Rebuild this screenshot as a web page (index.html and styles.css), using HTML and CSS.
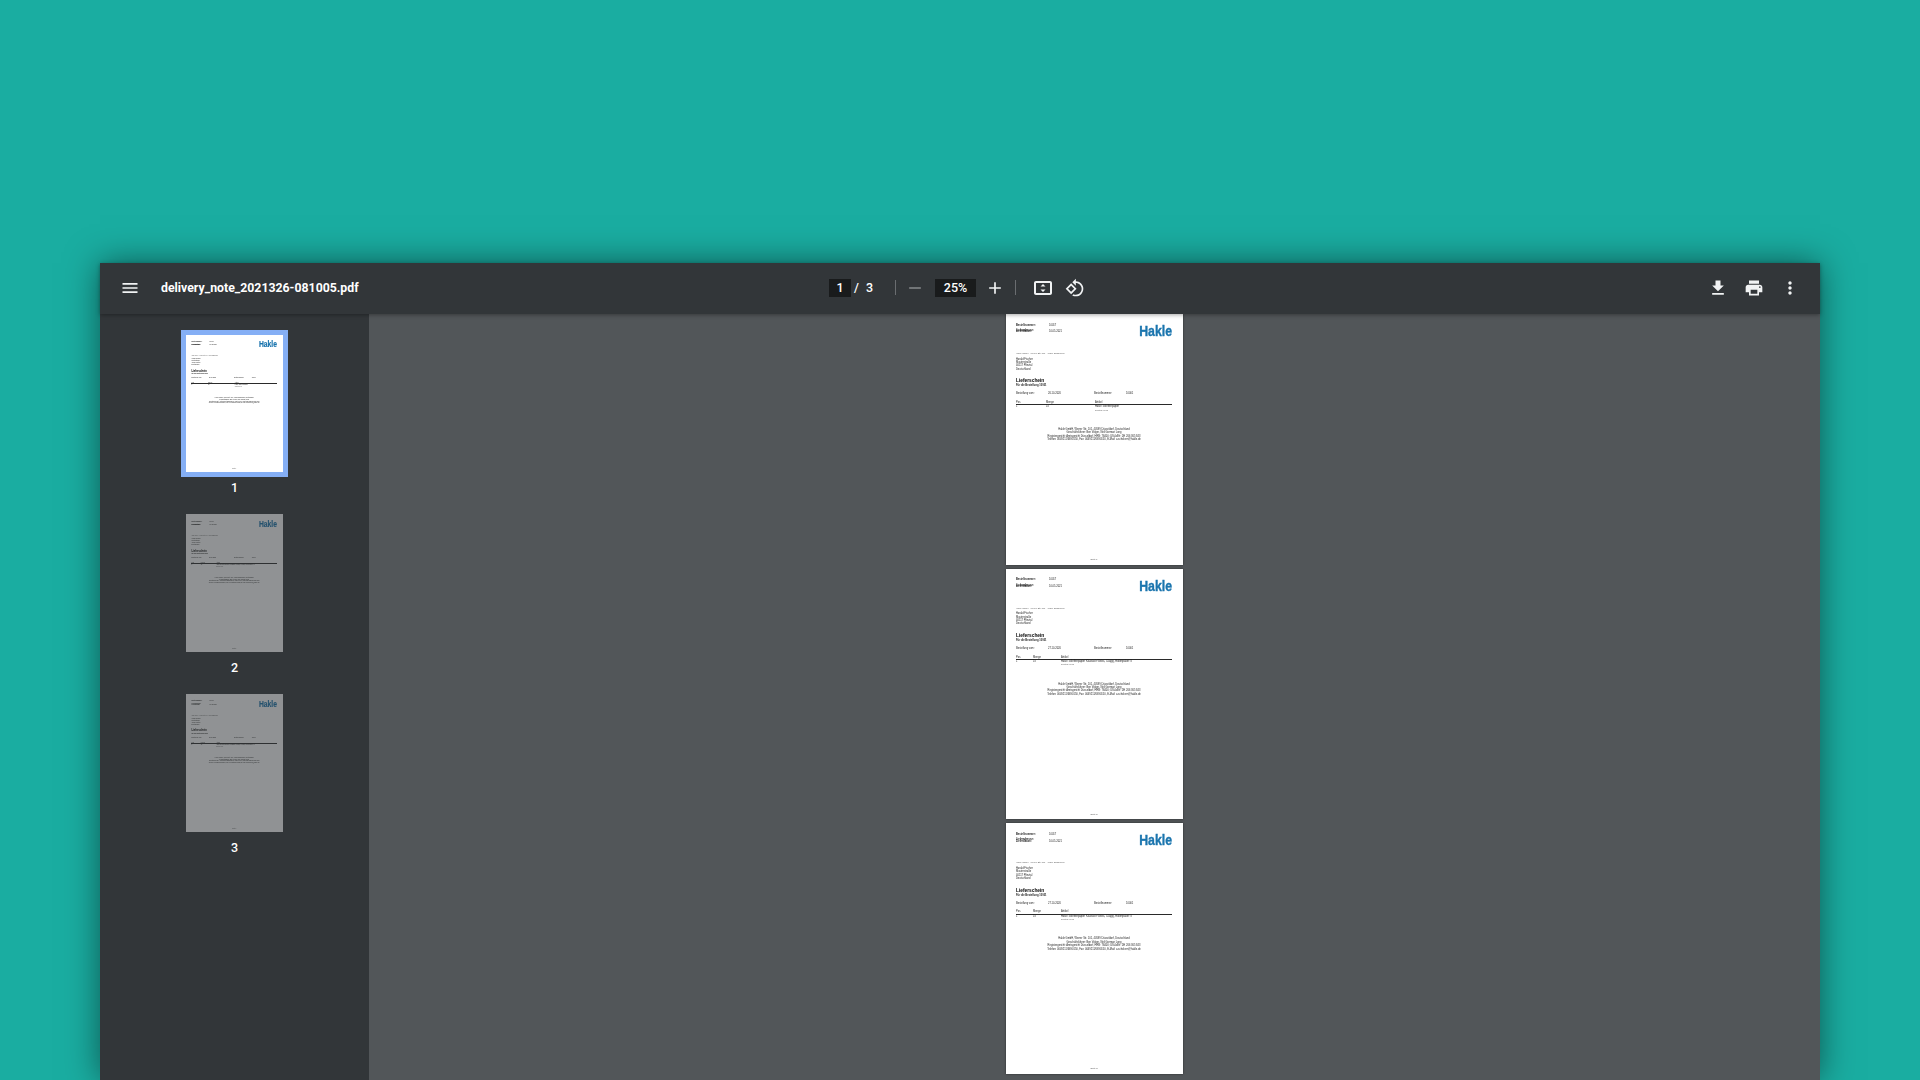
FILE: index.html
```html
<!DOCTYPE html>
<html lang="de">
<head>
<meta charset="utf-8">
<title>delivery_note_2021326-081005.pdf</title>
<link rel="stylesheet" href="styles.css">
</head>
<body>
<div class="viewer">
  <header class="toolbar">
    <div class="tb-left">
      <svg class="icon menu" viewBox="0 0 24 24"><path d="M3 18h18v-2H3v2zm0-5h18v-2H3v2zm0-7v2h18V6H3z"/></svg>
      <span class="title">delivery_note_2021326-081005.pdf</span>
    </div>
    <div class="tb-center">
      <span class="page-input">1</span>
      <span class="page-sep">/</span>
      <span class="page-total">3</span>
      <span class="divider first"></span>
      <svg class="icon dim" viewBox="0 0 24 24"><path d="M19 13H5v-2h14v2z"/></svg>
      <span class="zoom-input">25%</span>
      <svg class="icon" viewBox="0 0 24 24"><path d="M19 13h-6v6h-2v-6H5v-2h6V5h2v6h6v2z"/></svg>
      <span class="divider"></span>
      <svg class="icon large fit" viewBox="0 0 24 24"><path d="M19 5H5c-1.1 0-2 .9-2 2v10c0 1.1.9 2 2 2h14c1.1 0 2-.9 2-2V7c0-1.1-.9-2-2-2zm0 12H5V7h14v10z"/><path d="M12 8l-2.5 2.5h5zM12 16l2.5-2.5h-5z"/></svg>
      <svg class="icon rotate" viewBox="0 0 24 24"><path d="M7.34 6.41L.86 12.9l6.49 6.48 6.49-6.48-6.5-6.49zM3.69 12.9l3.66-3.66L11 12.9l-3.66 3.66-3.65-3.66zm15.67-6.26C17.61 4.88 15.3 4 13 4V.76L8.76 5 13 9.24V6c1.79 0 3.58.68 4.95 2.05 2.73 2.73 2.73 7.17 0 9.9C16.58 19.32 14.79 20 13 20c-.97 0-1.94-.21-2.84-.61l-1.49 1.49C10.02 21.62 11.51 22 13 22c2.3 0 4.61-.88 6.36-2.64 3.52-3.51 3.52-9.21 0-12.72z"/></svg>
    </div>
    <div class="tb-right">
      <svg class="icon" viewBox="0 0 24 24"><path d="M19 9h-4V3H9v6H5l7 7 7-7zM5 18v2h14v-2H5z"/></svg>
      <svg class="icon" viewBox="0 0 24 24"><path d="M19 8H5c-1.66 0-3 1.34-3 3v6h4v4h12v-4h4v-6c0-1.66-1.34-3-3-3zm-3 11H8v-5h8v5zm3-7c-.55 0-1-.45-1-1s.45-1 1-1 1 .45 1 1-.45 1-1 1zm-1-9H6v4h12V3z"/></svg>
      <svg class="icon" viewBox="0 0 24 24"><path d="M12 8c1.1 0 2-.9 2-2s-.9-2-2-2-2 .9-2 2 .9 2 2 2zm0 2c-1.1 0-2 .9-2 2s.9 2 2 2 2-.9 2-2-.9-2-2-2zm0 6c-1.1 0-2 .9-2 2s.9 2 2 2 2-.9 2-2-.9-2-2-2z"/></svg>
    </div>
  </header>
  <div class="body">
    <aside class="sidebar">
      <div class="thumb selected">
        <div class="thumb-frame">
          <article class="doc short">
            <div class="doc-head"><div class="meta"><b>Bestellnummer:</b><span>10017</span><b>Lieferadresse:</b><span></span><b>Lieferdatum:</b><span>10.05.2021</span></div><div class="logo">Hakle</div></div>
            <p class="sender">Hakle GmbH · Werrer Str. 101 · 40599 Düsseldorf</p>
            <div class="address"><span>Harald Fischer</span><b>Musterstraße</b><b>40117 Pfinztal</b><span>Deutschland</span></div>
            <h2 class="doc-title">Lieferschein</h2>
            <p class="doc-sub">Für die Bestellung 10001</p>
            <div class="order"><span>Bestellung vom:</span><span>26.10.2020</span><span>Bestellnummer:</span><span>10001</span></div>
            <div class="items head"><span>Pos</span><span>Menge</span><span>Artikel</span></div>
            <div class="items"><span>1</span><span>1x</span><span>Hakle Toilettenpapier<small>Zellstoff Weich</small></span></div>
            <div class="legal"><span>Hakle GmbH, Werrer Str. 101, 40599 Düsseldorf, Deutschland</span><span>Geschäftsführer: Ben Volger, Neil Gorman Long</span><span>Registergericht: Amtsgericht Düsseldorf, HRB: 76400; USt-IdNr: DE 266 365 843</span><span>Telefon: 0049211/6690150, Fax: 0049211/6690150, E-Mail: a.scholven@hakle.de</span></div>
            <div class="pageno">Seite 1</div>
          </article>
        </div>
        <span class="thumb-label">1</span>
      </div>
      <div class="thumb">
        <div class="thumb-frame">
          <article class="doc long">
            <div class="doc-head"><div class="meta"><b>Bestellnummer:</b><span>10017</span><b>Lieferadresse:</b><span></span><b>Lieferdatum:</b><span>10.05.2021</span></div><div class="logo">Hakle</div></div>
            <p class="sender">Hakle GmbH · Werrer Str. 101 · 40599 Düsseldorf</p>
            <div class="address"><span>Harald Fischer</span><b>Musterstraße</b><b>40117 Pfinztal</b><span>Deutschland</span></div>
            <h2 class="doc-title">Lieferschein</h2>
            <p class="doc-sub">Für die Bestellung 10001</p>
            <div class="order"><span>Bestellung vom:</span><span>27.10.2020</span><span>Bestellnummer:</span><span>10001</span></div>
            <div class="items head"><span>Pos</span><span>Menge</span><span>Artikel</span></div>
            <div class="items"><span>1</span><span>1x</span><span>Hakle Toilettenpapier Klassisch Weiss, 3-lagig, Rollenpaket: 8<small>Zellstoff Weich</small></span></div>
            <div class="legal"><span>Hakle GmbH, Werrer Str. 101, 40599 Düsseldorf, Deutschland</span><span>Geschäftsführer: Ben Volger, Neil Gorman Long</span><span>Registergericht: Amtsgericht Düsseldorf, HRB: 76400; USt-IdNr: DE 266 365 843</span><span>Telefon: 0049211/6690150, Fax: 0049211/6690150, E-Mail: a.scholven@hakle.de</span></div>
            <div class="pageno">Seite 2</div>
          </article>
        </div>
        <span class="thumb-label">2</span>
      </div>
      <div class="thumb">
        <div class="thumb-frame">
          <article class="doc long">
            <div class="doc-head"><div class="meta"><b>Bestellnummer:</b><span>10017</span><b>Lieferadresse:</b><span></span><b>Lieferdatum:</b><span>10.05.2021</span></div><div class="logo">Hakle</div></div>
            <p class="sender">Hakle GmbH · Werrer Str. 101 · 40599 Düsseldorf</p>
            <div class="address"><span>Harald Fischer</span><b>Musterstraße</b><b>40117 Pfinztal</b><span>Deutschland</span></div>
            <h2 class="doc-title">Lieferschein</h2>
            <p class="doc-sub">Für die Bestellung 10001</p>
            <div class="order"><span>Bestellung vom:</span><span>27.10.2020</span><span>Bestellnummer:</span><span>10001</span></div>
            <div class="items head"><span>Pos</span><span>Menge</span><span>Artikel</span></div>
            <div class="items"><span>1</span><span>1x</span><span>Hakle Toilettenpapier Klassisch Weiss, 3-lagig, Rollenpaket: 8<small>Zellstoff Weich</small></span></div>
            <div class="legal"><span>Hakle GmbH, Werrer Str. 101, 40599 Düsseldorf, Deutschland</span><span>Geschäftsführer: Ben Volger, Neil Gorman Long</span><span>Registergericht: Amtsgericht Düsseldorf, HRB: 76400; USt-IdNr: DE 266 365 843</span><span>Telefon: 0049211/6690150, Fax: 0049211/6690150, E-Mail: a.scholven@hakle.de</span></div>
            <div class="pageno">Seite 3</div>
          </article>
        </div>
        <span class="thumb-label">3</span>
      </div>
    </aside>
    <main class="pages">
      <article class="doc short">
        <div class="doc-head"><div class="meta"><b>Bestellnummer:</b><span>10017</span><b>Lieferadresse:</b><span></span><b>Lieferdatum:</b><span>10.05.2021</span></div><div class="logo">Hakle</div></div>
        <p class="sender">Hakle GmbH · Werrer Str. 101 · 40599 Düsseldorf</p>
        <div class="address"><span>Harald Fischer</span><b>Musterstraße</b><b>40117 Pfinztal</b><span>Deutschland</span></div>
        <h2 class="doc-title">Lieferschein</h2>
        <p class="doc-sub">Für die Bestellung 10001</p>
        <div class="order"><span>Bestellung vom:</span><span>26.10.2020</span><span>Bestellnummer:</span><span>10001</span></div>
        <div class="items head"><span>Pos</span><span>Menge</span><span>Artikel</span></div>
        <div class="items"><span>1</span><span>1x</span><span>Hakle Toilettenpapier<small>Zellstoff Weich</small></span></div>
        <div class="legal"><span>Hakle GmbH, Werrer Str. 101, 40599 Düsseldorf, Deutschland</span><span>Geschäftsführer: Ben Volger, Neil Gorman Long</span><span>Registergericht: Amtsgericht Düsseldorf, HRB: 76400; USt-IdNr: DE 266 365 843</span><span>Telefon: 0049211/6690150, Fax: 0049211/6690150, E-Mail: a.scholven@hakle.de</span></div>
        <div class="pageno">Seite 1</div>
      </article>
      <article class="doc long">
        <div class="doc-head"><div class="meta"><b>Bestellnummer:</b><span>10017</span><b>Lieferadresse:</b><span></span><b>Lieferdatum:</b><span>10.05.2021</span></div><div class="logo">Hakle</div></div>
        <p class="sender">Hakle GmbH · Werrer Str. 101 · 40599 Düsseldorf</p>
        <div class="address"><span>Harald Fischer</span><b>Musterstraße</b><b>40117 Pfinztal</b><span>Deutschland</span></div>
        <h2 class="doc-title">Lieferschein</h2>
        <p class="doc-sub">Für die Bestellung 10001</p>
        <div class="order"><span>Bestellung vom:</span><span>27.10.2020</span><span>Bestellnummer:</span><span>10001</span></div>
        <div class="items head"><span>Pos</span><span>Menge</span><span>Artikel</span></div>
        <div class="items"><span>1</span><span>1x</span><span>Hakle Toilettenpapier Klassisch Weiss, 3-lagig, Rollenpaket: 8<small>Zellstoff Weich</small></span></div>
        <div class="legal"><span>Hakle GmbH, Werrer Str. 101, 40599 Düsseldorf, Deutschland</span><span>Geschäftsführer: Ben Volger, Neil Gorman Long</span><span>Registergericht: Amtsgericht Düsseldorf, HRB: 76400; USt-IdNr: DE 266 365 843</span><span>Telefon: 0049211/6690150, Fax: 0049211/6690150, E-Mail: a.scholven@hakle.de</span></div>
        <div class="pageno">Seite 2</div>
      </article>
      <article class="doc long">
        <div class="doc-head"><div class="meta"><b>Bestellnummer:</b><span>10017</span><b>Lieferadresse:</b><span></span><b>Lieferdatum:</b><span>10.05.2021</span></div><div class="logo">Hakle</div></div>
        <p class="sender">Hakle GmbH · Werrer Str. 101 · 40599 Düsseldorf</p>
        <div class="address"><span>Harald Fischer</span><b>Musterstraße</b><b>40117 Pfinztal</b><span>Deutschland</span></div>
        <h2 class="doc-title">Lieferschein</h2>
        <p class="doc-sub">Für die Bestellung 10001</p>
        <div class="order"><span>Bestellung vom:</span><span>27.10.2020</span><span>Bestellnummer:</span><span>10001</span></div>
        <div class="items head"><span>Pos</span><span>Menge</span><span>Artikel</span></div>
        <div class="items"><span>1</span><span>1x</span><span>Hakle Toilettenpapier Klassisch Weiss, 3-lagig, Rollenpaket: 8<small>Zellstoff Weich</small></span></div>
        <div class="legal"><span>Hakle GmbH, Werrer Str. 101, 40599 Düsseldorf, Deutschland</span><span>Geschäftsführer: Ben Volger, Neil Gorman Long</span><span>Registergericht: Amtsgericht Düsseldorf, HRB: 76400; USt-IdNr: DE 266 365 843</span><span>Telefon: 0049211/6690150, Fax: 0049211/6690150, E-Mail: a.scholven@hakle.de</span></div>
        <div class="pageno">Seite 3</div>
      </article>
    </main>
  </div>
</div>
</body>
</html>
```
FILE: styles.css
```css
* { box-sizing: border-box; margin: 0; padding: 0; }
html, body { height: 100%; overflow: hidden; }
body {
  background: #1aada1;
  padding: 263px 100px 0;
  font-family: Roboto, "Liberation Sans", sans-serif;
  color: #fff;
}
.viewer {
  height: 817px;
  display: flex;
  flex-direction: column;
  background: #323639;
  box-shadow: 0 0 32px rgba(0, 0, 0, .5);
}
.toolbar {
  height: 51px;
  flex: none;
  padding-bottom: 2px;
  display: grid;
  grid-template-columns: 1fr auto 1fr;
  align-items: center;
  background: #323639;
  box-shadow: 0 1px 4px rgba(0, 0, 0, .35);
  position: relative;
  z-index: 1;
}
.icon { width: 20px; height: 20px; fill: #f1f3f4; flex: none; display: block; }
.icon.large { width: 24px; height: 24px; }
.icon.dim { opacity: .4; }
.tb-left { display: flex; align-items: center; padding-left: 20px; gap: 21px; }
.title { font-size: 12.3px; font-weight: 700; white-space: nowrap; }
.tb-center { display: flex; align-items: center; font-size: 12.5px; font-weight: 500; margin-right: 6px; }
.page-input { width: 22px; height: 18px; background: #191b1c; display: flex; align-items: center; justify-content: center; }
.page-sep { margin-left: 3px; }
.page-total { margin-left: 7px; }
.divider { width: 1px; height: 15px; background: #6a6d70; margin-left: 10px; }
.divider.first { margin: 0 9px 0 22px; }
.zoom-input { width: 41px; height: 18px; background: #191b1c; display: flex; align-items: center; justify-content: center; margin: 0 9px 0 10px; }
.fit { margin-left: 15px; }
.rotate { margin-left: 10px; }
.tb-right { display: flex; justify-content: flex-end; align-items: center; gap: 16px; padding-right: 20px; }
.body { flex: 1; min-height: 0; display: flex; }
.sidebar {
  width: 269px;
  flex: none;
  padding-top: 20.5px;
  display: flex;
  flex-direction: column;
  align-items: center;
  gap: 19px;
  background: #323639;
}
.thumb { display: flex; flex-direction: column; align-items: center; gap: 8.5px; --u: .548px; }
.thumb-label { font-size: 12.5px; line-height: 15px; font-weight: 500; }
.thumb-frame { opacity: .46; }
.thumb.selected .thumb-frame { opacity: 1; outline: 5px solid #85aff5; }
.thumb .doc-head { padding-top: 1px; }
.pages {
  flex: 1;
  min-width: 0;
  display: flex;
  flex-direction: column;
  align-items: center;
  gap: 4px;
  background: #525659;
  --u: 1px;
}
.doc {
  width: calc(177 * var(--u));
  height: calc(250.7 * var(--u));
  flex: none;
  background: #fff;
  color: #1c1c1c;
  padding: calc(9.5 * var(--u)) calc(11 * var(--u)) 0 calc(10 * var(--u));
  font-family: "Liberation Sans", Arial, sans-serif;
  font-size: calc(2.6 * var(--u));
  line-height: calc(3.4 * var(--u));
  display: flex;
  flex-direction: column;
}
.doc > * { filter: blur(.25px); }
.pages .doc { box-shadow: 0 0 2px rgba(0, 0, 0, .5); }
.doc-head { display: flex; justify-content: space-between; height: calc(28.5 * var(--u)); }
.meta {
  display: grid;
  grid-template-columns: calc(33 * var(--u)) auto;
  grid-auto-rows: calc(3.4 * var(--u));
  align-content: start;
}
.meta b:nth-of-type(2), .meta b:nth-of-type(2) + span { margin-top: calc(2 * var(--u)); }
.logo {
  font-weight: 700;
  font-size: calc(15 * var(--u));
  line-height: calc(13 * var(--u));
  color: #1b75ae;
  -webkit-text-stroke: calc(.4 * var(--u)) #1b75ae;
  margin-top: calc(.5 * var(--u));
  transform: scaleX(.82);
  transform-origin: right center;
}
.sender { font-size: calc(2.2 * var(--u)); color: #555; height: calc(5.5 * var(--u)); }
.address { display: flex; flex-direction: column; height: calc(20.7 * var(--u)); }
.address b { font-weight: 400; }
.doc-title { font-size: calc(4.8 * var(--u)); line-height: calc(6 * var(--u)); font-weight: 700; color: #000; }
.doc-sub { font-weight: 700; height: calc(8 * var(--u)); }
.order {
  display: grid;
  grid-template-columns: calc(32 * var(--u)) calc(46 * var(--u)) calc(32 * var(--u)) auto;
  height: calc(8.8 * var(--u));
}
.items { display: grid; grid-template-columns: calc(30 * var(--u)) calc(49 * var(--u)) 1fr; }
.long .items { grid-template-columns: calc(17 * var(--u)) calc(28 * var(--u)) 1fr; }
.items.head { border-bottom: calc(1.6 * var(--u)) solid #2a2a2a; height: calc(4.2 * var(--u)); line-height: calc(3.4 * var(--u)); }
.items small { display: block; font-size: calc(2 * var(--u)); line-height: calc(2.4 * var(--u)); color: #666; }
.legal {
  display: flex;
  flex-direction: column;
  align-items: center;
  margin-top: calc(17 * var(--u));
  height: calc(130 * var(--u));
  text-align: center;
}
.pageno { text-align: center; color: #444; font-size: calc(2.2 * var(--u)); }
```
